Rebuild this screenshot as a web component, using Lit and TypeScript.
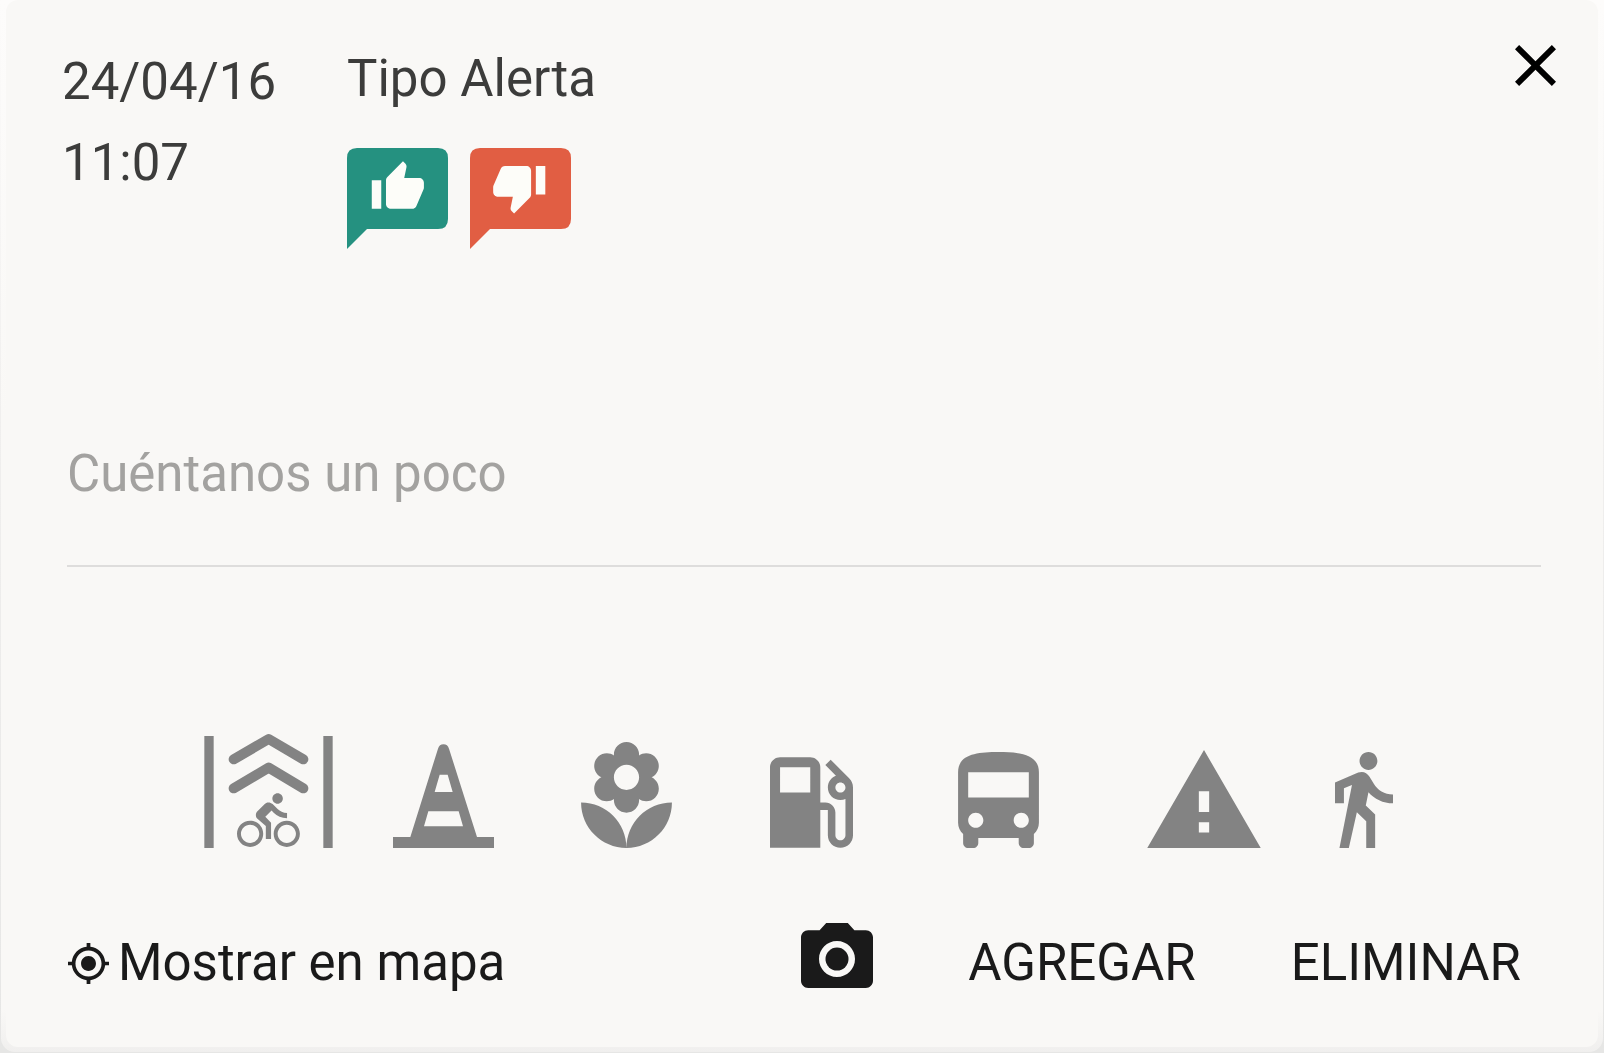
import { LitElement, html, css, svg } from "lit";
import { customElement, state } from "lit/decorators.js";

interface AlertKind {
  id: string;
  label: string;
  viewBox: string;
  width: number;
  height: number;
  art: unknown;
}

const KINDS: AlertKind[] = [
  {
    id: "ciclovia",
    label: "Ciclovía",
    viewBox: "42 38 387 345",
    width: 129,
    height: 115,
    art: svg`
      <path d="M43 47h28v336h-28zM400 47h28v336h-28z" />
      <path
        d="M131 117L236 56L340 117M131 204L236 142L340 204"
        fill="none" stroke="currentColor" stroke-width="30"
        stroke-linecap="round" stroke-linejoin="round" />
      <path
        transform="translate(141 207) scale(7.86)"
        d="M15.5 5.5c1.1 0 2-.9 2-2s-.9-2-2-2-2 .9-2 2 .9 2 2 2zM5 12c-2.8 0-5 2.2-5 5s2.2 5 5 5 5-2.2 5-5-2.2-5-5-5zm0 8.5c-1.9 0-3.5-1.6-3.5-3.5s1.6-3.5 3.5-3.5 3.5 1.6 3.5 3.5-1.6 3.5-3.5 3.5zm5.8-10l2.4-2.4.8.8c1.3 1.3 3 2.1 5.1 2.1V9c-1.5 0-2.7-.6-3.6-1.5l-1.9-1.9c-.5-.4-1-.6-1.6-.6s-1.1.2-1.4.6L7.8 8.4c-.4.4-.6.9-.6 1.4 0 .6.2 1.1.6 1.4L11 14v5h2v-6.2l-2.2-2.3zM19 12c-2.8 0-5 2.2-5 5s2.2 5 5 5 5-2.2 5-5-2.2-5-5-5zm0 8.5c-1.9 0-3.5-1.6-3.5-3.5s1.6-3.5 3.5-3.5 3.5 1.6 3.5 3.5-1.6 3.5-3.5 3.5z" />`,
  },
  {
    id: "obra",
    label: "Obra",
    viewBox: "609 71 303 312",
    width: 101,
    height: 104,
    art: svg`<path
      fill-rule="evenodd"
      d="M609 350H661L744 85Q748 72 760.5 72Q773 72 777 85L861 350H912V383H609ZM749 163L734 215H788L773 163ZM715 273L702 318H819L806 273Z" />`,
  },
  {
    id: "parque",
    label: "Parque",
    viewBox: "3 1 18 21",
    width: 91,
    height: 106,
    art: svg`<path
      d="M12 22c4.97 0 9-4.03 9-9-4.97 0-9 4.03-9 9zM5.6 10.25c0 1.38 1.12 2.5 2.5 2.5.53 0 1.01-.16 1.42-.44l-.02.19c0 1.38 1.12 2.5 2.5 2.5s2.5-1.12 2.5-2.5l-.02-.19c.4.28.89.44 1.42.44 1.38 0 2.5-1.12 2.5-2.5 0-1-.59-1.85-1.43-2.25.84-.4 1.43-1.25 1.43-2.25 0-1.38-1.12-2.5-2.5-2.5-.53 0-1.01.16-1.42.44l.02-.19C14.5 2.12 13.38 1 12 1S9.5 2.12 9.5 3.5l.02.19c-.4-.28-.89-.44-1.42-.44-1.38 0-2.5 1.12-2.5 2.5 0 1 .59 1.85 1.43 2.25-.84.4-1.43 1.25-1.43 2.25zM12 5.5c1.38 0 2.5 1.12 2.5 2.5s-1.12 2.5-2.5 2.5S9.5 9.38 9.5 8s1.12-2.5 2.5-2.5zM3 13c0 4.97 4.03 9 9 9 0-4.97-4.03-9-9-9z" />`,
  },
  {
    id: "gasolinera",
    label: "Gasolinera",
    viewBox: "4 3 16.5 18",
    width: 83,
    height: 91,
    art: svg`<path
      d="M19.77 7.23l.01-.01-3.72-3.72L15 4.56l2.11 2.11c-.94.36-1.61 1.26-1.61 2.33 0 1.38 1.12 2.5 2.5 2.5.36 0 .69-.08 1-.21v7.21c0 .55-.45 1-1 1s-1-.45-1-1V14c0-1.1-.9-2-2-2h-1V5c0-1.1-.9-2-2-2H6c-1.1 0-2 .9-2 2v16h10v-7.5h1.5v5c0 1.38 1.12 2.5 2.5 2.5s2.5-1.12 2.5-2.5V9c0-.69-.28-1.32-.73-1.77zM12 10H6V5h6v5zm6 0c-.55 0-1-.45-1-1s.45-1 1-1 1 .45 1 1-.45 1-1 1z" />`,
  },
  {
    id: "autobus",
    label: "Autobús",
    viewBox: "4 2 16 19",
    width: 81,
    height: 96,
    art: svg`<path
      d="M4 16c0 .88.39 1.67 1 2.22V20c0 .55.45 1 1 1h1c.55 0 1-.45 1-1v-1h8v1c0 .55.45 1 1 1h1c.55 0 1-.45 1-1v-1.78c.61-.55 1-1.34 1-2.22V6c0-3.5-3.58-4-8-4s-8 .5-8 4v10zm3.5 1c-.83 0-1.5-.67-1.5-1.5S6.67 14 7.5 14s1.5.67 1.5 1.5S8.33 17 7.5 17zm9 0c-.83 0-1.5-.67-1.5-1.5s.67-1.5 1.5-1.5 1.5.67 1.5 1.5-.67 1.5-1.5 1.5zm1.5-6H6V6h12v5z" />`,
  },
  {
    id: "peligro",
    label: "Peligro",
    viewBox: "1 2 22 19",
    width: 114,
    height: 98,
    art: svg`<path d="M1 21h22L12 2 1 21zm12-3h-2v-2h2v2zm0-4h-2v-4h2v4z" />`,
  },
  {
    id: "peaton",
    label: "Peatón",
    viewBox: "6 1.5 13 21.5",
    width: 58,
    height: 96,
    art: svg`<path
      d="M13.5 5.5c1.1 0 2-.9 2-2s-.9-2-2-2-2 .9-2 2 .9 2 2 2zM9.8 8.9L7 23h2.1l1.8-8 2.1 2v6h2v-7.5l-2.1-2 .6-3C14.8 12 16.8 13 19 13v-2c-1.9 0-3.5-1-4.3-2.4l-1-1.6c-.4-.6-1-1-1.7-1-.3 0-.5.1-.8.1L6 8.3V13h2V9.6l1.8-.7z" />`,
  },
];

@customElement("app-root")
export class AppRoot extends LitElement {
  @state() private selected = "";

  static styles = css`
    :host {
      display: block;
      background: linear-gradient(#fdfcfb, #f0efee 40%, #e6e6e5);
      font-family: Roboto, "Liberation Sans", sans-serif;
      font-size: 51px;
      line-height: 60px;
      color: #3c3c3b;
    }
    .frame {
      box-sizing: border-box;
      display: flex;
      min-height: 100vh;
      padding: 0 5px 5px;
      border: solid transparent;
      border-width: 0 1px 1px;
      border-radius: 0 0 15px 15px;
      background: linear-gradient(#fdfcfb, #f9f8f6 40%, #f9f8f6 96%, #f0efee) padding-box;
    }
    .card {
      box-sizing: border-box;
      flex: 1;
      display: flex;
      flex-direction: column;
      padding: 40px 42px 54px 56px;
      border-radius: 12px;
      background: #f9f8f6;
    }
    button {
      margin: 0;
      padding: 0;
      border: 0;
      background: none;
      font: inherit;
      color: inherit;
      cursor: pointer;
    }
    svg {
      display: block;
      fill: currentColor;
    }
    .header {
      display: grid;
      grid-template-columns: 285px 1fr auto;
      align-items: start;
    }
    .when {
      display: flex;
      flex-direction: column;
      padding-top: 1px;
      line-height: 81px;
    }
    .title {
      margin: 0;
      padding-top: 9px;
      font: inherit;
    }
    .votes {
      display: flex;
      gap: 22px;
      margin-top: 39px;
    }
    .up {
      color: #259180;
    }
    .down {
      color: #e15e43;
    }
    .thumb {
      fill: #fdfdf9;
    }
    .close {
      padding-top: 5px;
      color: #000;
    }
    .note {
      box-sizing: border-box;
      height: 124px;
      margin: 194px 15px 0 5px;
      padding: 0 0 62px;
      border: 0;
      border-bottom: 2px solid #dedddc;
      border-radius: 0;
      outline: none;
      background: none;
      font: inherit;
      color: inherit;
    }
    .note::placeholder {
      color: #a3a2a0;
      opacity: 1;
    }
    .kinds {
      display: grid;
      grid-template-columns: repeat(7, 1fr);
      align-items: end;
      margin: 166px 32px 0 142px;
      color: #838383;
    }
    .kind {
      justify-self: start;
    }
    .kind[aria-pressed="true"] {
      color: #259180;
    }
    .actions {
      display: flex;
      align-items: flex-end;
      justify-content: space-between;
      margin: auto 35px 0 6px;
      color: #1a1a1a;
    }
    .locate {
      display: flex;
      align-items: center;
      gap: 9px;
    }
    .tools {
      display: flex;
      align-items: flex-end;
      gap: 95px;
    }
    .photo {
      padding-bottom: 5px;
    }
  `;

  private toggle(id: string) {
    this.selected = this.selected === id ? "" : id;
  }

  render() {
    return html`
      <div class="frame">
      <main class="card">
        <header class="header">
          <time class="when" datetime="2016-04-24T11:07">
            <span>24/04/16</span>
            <span>11:07</span>
          </time>
          <div>
            <h1 class="title">Tipo Alerta</h1>
            <div class="votes">
              <button class="up" type="button" aria-label="A favor">
                <svg width="101" height="101" viewBox="0 0 101 101">
                  <path d="M10 0H91Q101 0 101 10V71Q101 81 91 81H20L0 101V10Q0 0 10 0Z" />
                  <path
                    class="thumb"
                    transform="translate(22.4 11) scale(2.37)"
                    d="M1 21h4V9H1v12zm22-11c0-1.1-.9-2-2-2h-6.31l.95-4.57.03-.32c0-.41-.17-.79-.44-1.06L14.17 1 7.59 7.59C7.22 7.95 7 8.45 7 9v10c0 1.1.9 2 2 2h9c.83 0 1.54-.5 1.84-1.22l3.02-7.05c.09-.23.14-.47.14-.73v-1.91l-.01-.01L23 10z" />
                </svg>
              </button>
              <button class="down" type="button" aria-label="En contra">
                <svg width="101" height="101" viewBox="0 0 101 101">
                  <path d="M10 0H91Q101 0 101 10V71Q101 81 91 81H20L0 101V10Q0 0 10 0Z" />
                  <path
                    class="thumb"
                    transform="translate(20.8 10.9) scale(2.37)"
                    d="M15 3H6c-.83 0-1.54.5-1.84 1.22l-3.02 7.05c-.09.23-.14.47-.14.73v1.91l.01.01L1 14c0 1.1.9 2 2 2h6.31l-.95 4.57-.03.32c0 .41.17.79.44 1.06L9.83 23l6.59-6.59c.36-.36.58-.86.58-1.41V5c0-1.1-.9-2-2-2zm4 0v12h4V3h-4z" />
                </svg>
              </button>
            </div>
          </div>
          <button class="close" type="button" aria-label="Cerrar">
            <svg width="41" height="41" viewBox="5 5 14 14">
              <path
                d="M19 6.41L17.59 5 12 10.59 6.41 5 5 6.41 10.59 12 5 17.59 6.41 19 12 13.41 17.59 19 19 17.59 13.41 12z" />
            </svg>
          </button>
        </header>

        <input
          class="note"
          type="text"
          aria-label="Cuéntanos un poco"
          placeholder="Cuéntanos un poco" />

        <div class="kinds" role="group" aria-label="Tipo de alerta">
          ${KINDS.map(
            (k) => html`
              <button
                class="kind"
                type="button"
                aria-label=${k.label}
                aria-pressed=${this.selected === k.id ? "true" : "false"}
                @click=${() => this.toggle(k.id)}>
                <svg width=${k.width} height=${k.height} viewBox=${k.viewBox}>${k.art}</svg>
              </button>
            `
          )}
        </div>

        <footer class="actions">
          <button class="locate" type="button">
            <svg width="41" height="41" viewBox="1 1 22 22">
              <path
                d="M12 8c-2.21 0-4 1.79-4 4s1.79 4 4 4 4-1.79 4-4-1.79-4-4-4zm8.94 3c-.46-4.17-3.77-7.48-7.94-7.94V1h-2v2.06C6.83 3.52 3.52 6.83 3.06 11H1v2h2.06c.46 4.17 3.77 7.48 7.94 7.94V23h2v-2.06c4.17-.46 7.48-3.77 7.94-7.94H23v-2h-2.06zM12 19c-3.87 0-7-3.13-7-7s3.13-7 7-7 7 3.13 7 7-3.13 7-7 7z" />
            </svg>
            <span>Mostrar en mapa</span>
          </button>
          <div class="tools">
            <button class="photo" type="button" aria-label="Tomar foto">
              <svg width="72" height="65" viewBox="2 2 20 18">
                <circle cx="12" cy="12" r="3.2" />
                <path
                  d="M9 2L7.17 4H4c-1.1 0-2 .9-2 2v12c0 1.1.9 2 2 2h16c1.1 0 2-.9 2-2V6c0-1.1-.9-2-2-2h-3.17L15 2H9zm3 15c-2.76 0-5-2.24-5-5s2.24-5 5-5 5 2.24 5 5-2.24 5-5 5z" />
              </svg>
            </button>
            <button type="button">AGREGAR</button>
            <button type="button">ELIMINAR</button>
          </div>
        </footer>
      </main>
      </div>
    `;
  }
}
